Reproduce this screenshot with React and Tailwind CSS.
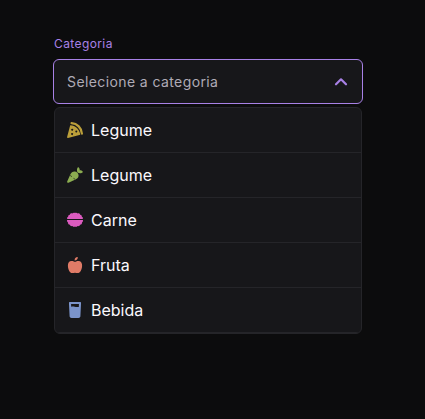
function PizzaIcon() {
  return (
    <svg viewBox="0 0 16 16" className="size-4 shrink-0">
      <path fill="#bb9f3a" fillRule="evenodd" d="M3.200 3.200C8.700 3.500 12.500 7.200 13.300 12.700L1 15.950C.4 16.100 0 15.600.1 15.100ZM5.200 6.700a.95.95 0 1 0 .01 0ZM9.300 8.600a.9.9 0 1 0 .01 0ZM5.100 11.100a.95.95 0 1 0 .01 0Z" />
      <path fill="none" stroke="#bb9f3a" strokeWidth="2.300" strokeLinecap="round" d="M4.600 1.200C10.200 1.500 14.500 5.900 14.850 11.500" />
    </svg>
  );
}

function CarrotIcon() {
  return (
    <svg viewBox="0 0 16 16" className="size-4 shrink-0">
      <path fill="#8cad51" fillRule="evenodd" d="M.4 15.600C-.2 15 .2 14.500.4 14L3.300 7.400C4.200 5.600 5.500 4.500 7.500 4.500C10 4.500 11.700 6.400 11.600 8.600C11.500 10.700 10.300 11.800 8.500 12.600L2 15.600C1.400 15.900.8 16 .4 15.600ZM3.500 8.100L3.200 8.700L4.600 10.100L5 9.700ZM6.800 10.800L6.400 11.200L7.700 12.600L8.200 12.400Z" />
      <path fill="#8cad51" d="M10.600 5.500C9.600 3.800 9.700 1.600 11.100 0C12.400 1 12.900 2.200 12.700 3.400C14 3.100 15.100 3.700 16 4.900C14.700 6.500 12.400 6.700 10.600 5.500Z" />
    </svg>
  );
}

function BurgerIcon() {
  return (
    <svg viewBox="0 0 16 16" className="size-4 shrink-0" fill="#db5bbf">
      <path d="M.5 7C0 7-.1 6.100.3 5.300L1.100 4.900C1 3.700 1.700 2.800 2.800 2.700C3.200 1.600 4.200 1.200 5.200 1.400C6 .6 7.300.5 8 1C8.700.5 10 .6 10.800 1.400C11.800 1.200 12.800 1.600 13.200 2.700C14.300 2.800 15 3.700 14.900 4.900L15.700 5.300C16.100 6.100 16 7 15.500 7Z" />
      <path d="M.1 8H15.900C16.200 9.300 15.800 10.200 15 10.600C15.100 11.900 14.300 12.700 13.200 12.800C12.800 13.900 11.800 14.400 10.800 14.100C10 15 8.700 15.100 8 14.600C7.300 15.100 6 15 5.200 14.100C4.200 14.400 3.200 13.900 2.800 12.800C1.700 12.700.9 11.900 1 10.600C.2 10.200-.2 9.300.1 8Z" />
    </svg>
  );
}

function AppleIcon() {
  return (
    <svg viewBox="0 0 16 16" className="size-4 shrink-0" fill="#e07b67">
      <path d="M4.500 3.900C5.900 3.900 7 4.500 8 4.800C9 4.500 10.100 3.900 11.500 3.900C13.900 3.900 15.100 5.900 15.100 8.400C15.100 12.300 13.300 16 10.700 16C9.600 16 8.900 15.700 8 15.700C7.100 15.700 6.400 16 5.300 16C2.700 16 .9 12.300.9 8.400C.9 5.900 2.100 3.900 4.500 3.900Z" />
      <path d="M7.600 3.600C7.500 1.500 8.500.1 10.800.1C10.900 2.300 9.700 3.600 7.600 3.600Z" />
    </svg>
  );
}

function CupIcon() {
  return (
    <svg viewBox="0 0 16 16" className="size-4 shrink-0">
      <path fill="#7b94cb" fillRule="evenodd" d="M2.900 0H13.100C13.700 0 14.100.5 14.050 1.100L13.400 14.300C13.300 15.300 12.500 16 11.500 16H4.500C3.500 16 2.700 15.300 2.600 14.300L1.950 1.100C1.900.5 2.300 0 2.900 0ZM4.050 2L4.200 4.700C5.400 4.350 6.600 4.400 7.700 4.750C9 5.150 10.300 5.150 11.800 4.900L11.950 2Z" />
    </svg>
  );
}

const categories = [
  { label: "Legume", Icon: PizzaIcon },
  { label: "Legume", Icon: CarrotIcon },
  { label: "Carne", Icon: BurgerIcon },
  { label: "Fruta", Icon: AppleIcon },
  { label: "Bebida", Icon: CupIcon },
];

export default function App() {
  return (
    <main className="h-[419px] w-full bg-[#0c0c0d] pl-[53px] pt-9 font-['Inter',sans-serif]">
      <div className="w-[310px]">
        <span className="block pl-px text-xs leading-4 tracking-[0.4px] text-[#a881e6]">Categoria</span>
        <button className="mt-[7px] flex h-[45px] w-full items-center justify-between rounded-md border border-[#a881e6] bg-[#17171a] pl-[13px] pr-[13px] text-left">
          <span className="text-sm leading-5 tracking-[0.4px] text-[#afabb6]">Selecione a categoria</span>
          <svg viewBox="0 0 16 16" className="size-4" fill="none" stroke="#a881e6" strokeWidth="2.200" strokeLinecap="round" strokeLinejoin="round">
            <path d="M3 10.300L8 5.300L13 10.300" />
          </svg>
        </button>
        <ul className="mx-px mt-[3px] overflow-hidden rounded-md border border-[#252529] bg-[#17171a]">
          {categories.map(({ label, Icon }, i) => (
            <li key={i} className="flex h-[45px] items-center gap-2 border-b border-[#252529] px-3">
              <Icon />
              <span className="text-base leading-6 text-[#fbf9fe]">{label}</span>
            </li>
          ))}
        </ul>
      </div>
    </main>
  );
}
